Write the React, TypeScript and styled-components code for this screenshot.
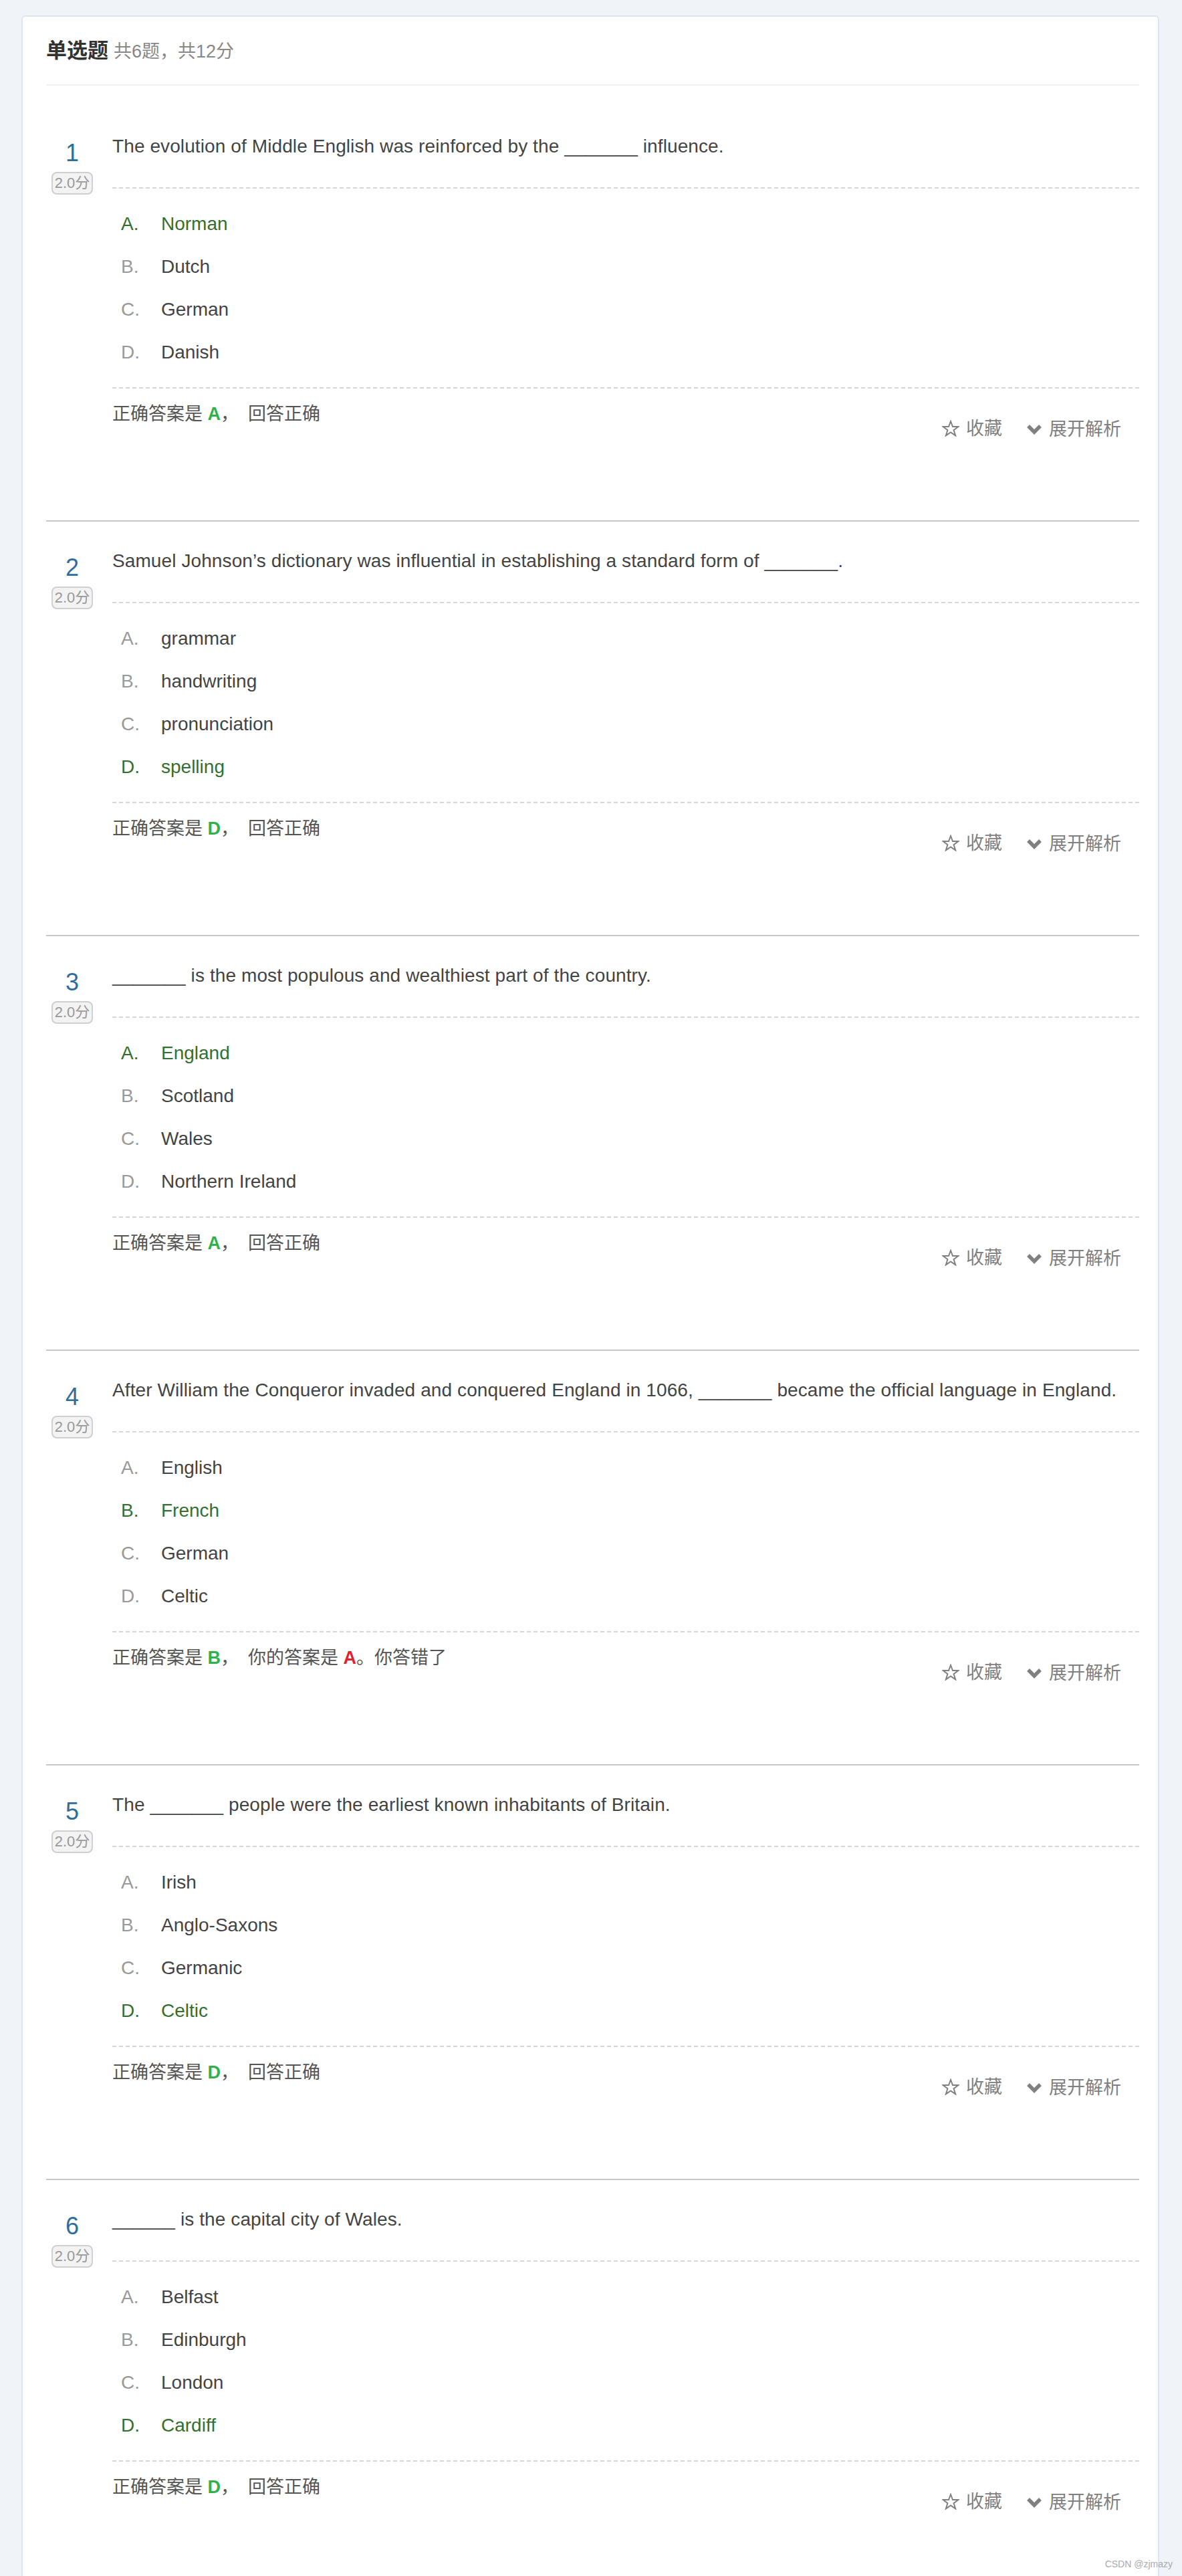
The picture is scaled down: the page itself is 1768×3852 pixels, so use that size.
import React from "react";
import styled, { createGlobalStyle } from "styled-components";

type Question = {
  text: string;
  options: string[];
  correct: number;
  mine?: number;
};

const LETTERS = ["A", "B", "C", "D"];

const questions: Question[] = [
  {
    text: "The evolution of Middle English was reinforced by the _______ influence.",
    options: ["Norman", "Dutch", "German", "Danish"],
    correct: 0,
  },
  {
    text: "Samuel Johnson’s dictionary was influential in establishing a standard form of _______.",
    options: ["grammar", "handwriting", "pronunciation", "spelling"],
    correct: 3,
  },
  {
    text: "_______ is the most populous and wealthiest part of the country.",
    options: ["England", "Scotland", "Wales", "Northern Ireland"],
    correct: 0,
  },
  {
    text: "After William the Conqueror invaded and conquered England in 1066, _______ became the official language in England.",
    options: ["English", "French", "German", "Celtic"],
    correct: 1,
    mine: 0,
  },
  {
    text: "The _______ people were the earliest known inhabitants of Britain.",
    options: ["Irish", "Anglo-Saxons", "Germanic", "Celtic"],
    correct: 3,
  },
  {
    text: "______ is the capital city of Wales.",
    options: ["Belfast", "Edinburgh", "London", "Cardiff"],
    correct: 3,
  },
];

const GlobalStyle = createGlobalStyle`
  body {
    margin: 0;
    background: #f0f4f8;
    font-family: "Liberation Sans", Arial, "Noto Sans CJK SC", sans-serif;
  }
`;

const StarIcon = () => (
  <svg width="26" height="25" viewBox="0 0 26 25">
    <polygon
      points="13,2 16,10 24.5,10 17.6,15.2 20.2,23.4 13,18.4 5.8,23.4 8.4,15.2 1.5,10 10,10"
      fill="none"
      stroke="#808080"
      strokeWidth="2"
      strokeLinejoin="miter"
    />
  </svg>
);

const ChevronIcon = () => (
  <svg width="24" height="16" viewBox="0 0 24 16">
    <polyline
      points="3,3 12,12 21,3"
      fill="none"
      stroke="#808080"
      strokeWidth="5.5"
      strokeLinejoin="miter"
    />
  </svg>
);

const App: React.FC = () => {
  return (
    <Page>
      <GlobalStyle />
      <Card>
        <Header>
          <Title>单选题</Title>
          <Summary>共6题，共12分</Summary>
        </Header>
        {questions.map((q, i) => {
          const wrong = q.mine !== undefined && q.mine !== q.correct;
          return (
            <Block key={i}>
              <Side>
                <Number>{i + 1}</Number>
                <Score>2.0分</Score>
              </Side>
              <Body>
                <Stem>{q.text}</Stem>
                <Options>
                  {q.options.map((opt, j) => (
                    <Option key={j} $right={j === q.correct}>
                      <Letter>{LETTERS[j]}.</Letter>
                      <span>{opt}</span>
                    </Option>
                  ))}
                </Options>
                <Footer>
                  <Answer>
                    正确答案是 <Key $color="#2db34a">{LETTERS[q.correct]}</Key>，
                    {wrong ? (
                      <Rest>
                        你的答案是 <Key $color="#e3202e">{LETTERS[q.mine as number]}</Key>。你答错了
                      </Rest>
                    ) : (
                      <Rest>回答正确</Rest>
                    )}
                  </Answer>
                  <Actions>
                    <Action>
                      <StarIcon />
                      收藏
                    </Action>
                    <Action $shift>
                      <ChevronIcon />
                      展开解析
                    </Action>
                  </Actions>
                </Footer>
              </Body>
            </Block>
          );
        })}
      </Card>
      <Watermark>CSDN @zjmazy</Watermark>
    </Page>
  );
};

export default App;

const Page = styled.div`
  position: relative;
  height: 3852px;
  overflow: hidden;
  padding: 23px 34px 0 32px;
  box-sizing: border-box;
`;

const Card = styled.div`
  background: #fff;
  border: 2px solid #dde6f0;
  border-radius: 6px;
  padding: 0 28px 0 35px;
`;

const Header = styled.div`
  display: flex;
  align-items: baseline;
  gap: 8px;
  padding: 31px 0 29px;
  border-bottom: 2px solid #f0f0f0;
  margin-bottom: 32px;
  line-height: 40px;
`;

const Title = styled.span`
  font-size: 31px;
  font-weight: bold;
  color: #333;
`;

const Summary = styled.span`
  font-size: 27px;
  color: #888;
`;

const Block = styled.div`
  display: flex;
  padding: 39px 0 116px;
  border-bottom: 2px solid #c8c8c8;
`;

const Side = styled.div`
  width: 78px;
  flex-shrink: 0;
  display: flex;
  flex-direction: column;
  align-items: center;
  padding-right: 21px;
`;

const Number = styled.div`
  margin-top: 10px;
  font-size: 36px;
  line-height: 40px;
  color: #2d6ea0;
`;

const Score = styled.div`
  margin-top: 8px;
  height: 30px;
  padding: 0 3px;
  border: 2px solid #cfcfcf;
  border-radius: 8px;
  background: #f3f3f3;
  color: #999;
  font-size: 22px;
  line-height: 30px;
  box-sizing: content-box;
`;

const Body = styled.div`
  flex: 1;
  min-width: 0;
`;

const Stem = styled.div`
  font-size: 28px;
  line-height: 40px;
  letter-spacing: 0.1px;
  color: #444;
  padding-bottom: 41px;
  border-bottom: 2px dashed #d6d6d6;
`;

const Options = styled.div`
  padding: 21px 0 20px 13px;
  border-bottom: 2px dashed #d6d6d6;
`;

const Option = styled.div<{ $right: boolean }>`
  display: flex;
  height: 64px;
  align-items: center;
  font-size: 28px;
  color: ${({ $right }) => ($right ? "#33702f" : "#444")};

  & > span:first-child {
    color: ${({ $right }) => ($right ? "#33702f" : "#999")};
  }
`;

const Letter = styled.span`
  width: 60px;
`;

const Footer = styled.div`
  display: flex;
  justify-content: space-between;
  align-items: flex-start;
  padding-top: 18px;
`;

const Answer = styled.div`
  font-size: 27px;
  line-height: 40px;
  color: #555;
`;

const Key = styled.b<{ $color: string }>`
  color: ${({ $color }) => $color};
`;

const Rest = styled.span`
  margin-left: 14px;
`;

const Actions = styled.div`
  display: flex;
  gap: 36px;
  margin-top: 20px;
  padding-right: 27px;
`;

const Action = styled.div<{ $shift?: boolean }>`
  display: flex;
  align-items: center;
  gap: 10px;
  font-size: 27px;
  line-height: 40px;
  color: #808080;
  margin-top: ${({ $shift }) => ($shift ? "3px" : "0")};
`;

const Watermark = styled.div`
  position: absolute;
  right: 14px;
  bottom: 10px;
  font-size: 14px;
  color: #aaa;
`;
